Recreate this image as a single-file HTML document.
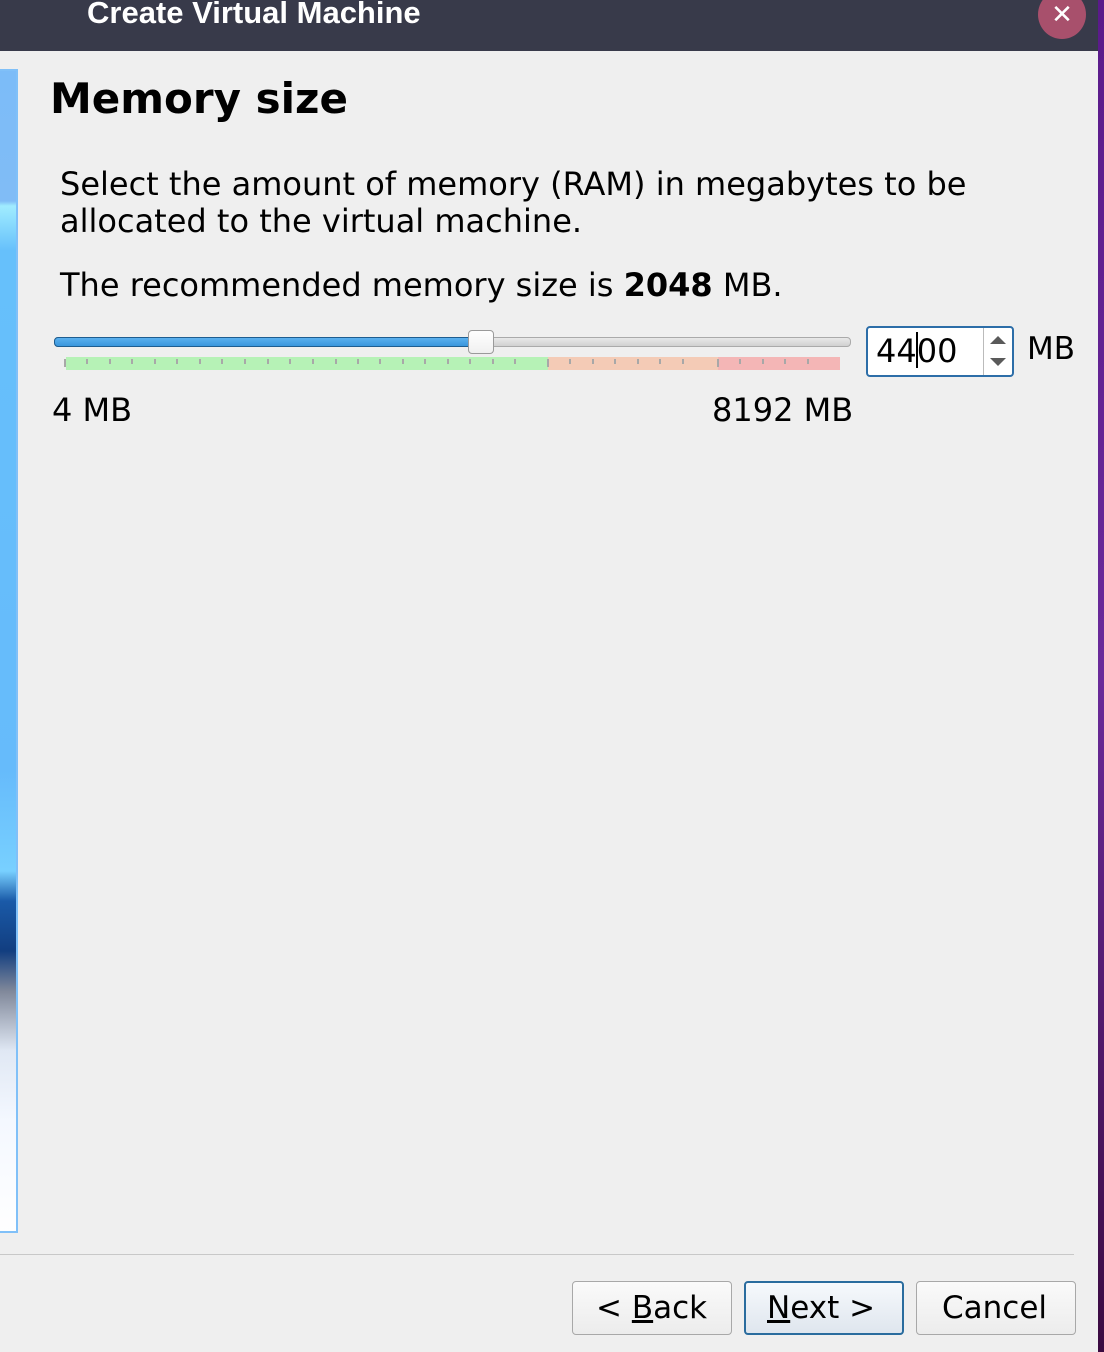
<!DOCTYPE html>
<html><head><meta charset="utf-8"><style>
*{margin:0;padding:0;box-sizing:border-box}
body{width:1104px;height:1352px;background:#efefef;position:relative;overflow:hidden;font-family:"DejaVu Sans","Liberation Sans",sans-serif;color:#000}
.abs{position:absolute}
#bar{left:0;top:0;width:1098px;height:51px;background:#383a4a}
#bar .t{left:87px;top:-5px;font:bold 31px "Liberation Sans",sans-serif;color:#fff;white-space:nowrap}
#close{left:1038px;top:-10px;width:48px;height:49px;border-radius:50%;background:#a8506c;color:#fff;font:bold 26px "DejaVu Sans",sans-serif;text-align:center;line-height:50px}
#edge{left:1098px;top:0;width:6px;height:1352px;background:linear-gradient(#5a1a8a,#6a2a9a 50%,#3a0a40)}
#strip{left:0;top:69px;width:18px;height:1164px;border:2px solid #80c0f8;border-left:none;background:linear-gradient(#7cbcf8 0,#80bcf6 130px,#a0ecff 135px,#66c0fb 180px,#66bbfb 700px,#78d0ff 800px,#1a5aa8 830px,#123e80 880px,#80889a 920px,#e0e8f4 980px,#f4f8ff 1050px,#fff 1164px)}
.txt{font-size:32px;white-space:nowrap}
</style></head><body>
<div id="bar" class="abs"><div class="t abs">Create Virtual Machine</div></div>
<div id="close" class="abs">✕</div>
<div id="edge" class="abs"></div>
<div id="strip" class="abs"></div>
<div class="abs" style="left:50px;top:74px;font-weight:bold;font-size:42px;white-space:nowrap">Memory size</div>
<div class="abs txt" style="left:60px;top:166px;line-height:37px">Select the amount of memory (RAM) in megabytes to be<br>allocated to the virtual machine.</div>
<div class="abs txt" style="left:60px;top:266px">The recommended memory size is <b>2048</b> MB.</div>
<div class="abs" style="left:54px;top:337px;width:797px;height:10px;border-radius:4px;background:linear-gradient(#e8e8e8,#d0d0d0);border:1px solid #aaa"></div>
<div class="abs" style="left:54px;top:337px;width:430px;height:10px;border-radius:4px;background:linear-gradient(#5ab0ee,#3a96dc);border:1px solid #1e5d90"></div>
<div class="abs" style="left:468px;top:330px;width:26px;height:24px;border-radius:4px;background:linear-gradient(#fff,#f0f0f0);border:1px solid #9a9a9a"></div>
<div class="abs" style="left:66px;top:357px;width:482px;height:13px;background:#b6f2b6"></div>
<div class="abs" style="left:548px;top:357px;width:170px;height:13px;background:#f4cbb6"></div>
<div class="abs" style="left:718px;top:357px;width:122px;height:13px;background:#f4b6b6"></div>
<svg class="abs" style="left:0;top:0" width="1104" height="400">
<g stroke="#a8a8a8" stroke-width="2">
<path d="M65 359v8 M87 359v5 M110 359v5 M132 359v5 M155 359v5 M177 359v5 M200 359v5 M222 359v5 M245 359v5 M268 359v5 M290 359v5 M313 359v5 M336 359v5 M358 359v5 M380 359v5 M403 359v5 M425 359v5 M448 359v5 M470 359v5 M493 359v5 M515 359v5 M548 359v8 M570 359v5 M593 359v5 M615 359v5 M638 359v5 M660 359v5 M683 359v5 M718 359v8 M740 359v5 M763 359v5 M785 359v5 M808 359v5"/>
</g></svg>
<div class="abs txt" style="left:52px;top:391px">4 MB</div>
<div class="abs txt" style="left:712px;top:391px">8192 MB</div>
<div class="abs" style="left:866px;top:326px;width:148px;height:51px;border:2px solid #2d6ea8;border-radius:4px;background:#fff"></div>
<div class="abs" style="left:983px;top:328px;width:1px;height:47px;background:#bbb"></div>
<div class="abs txt" style="left:876px;top:332px;font-size:32px">44<span style="display:inline-block;width:2px;height:36px;background:#000;vertical-align:-6px;margin:0 -1px"></span>00</div>
<svg class="abs" style="left:986px;top:330px" width="24" height="44"><path d="M4 14l8-8 8 8z M4 28l8 8 8-8z" fill="#5a5a5a"/></svg>
<div class="abs txt" style="left:1027px;top:331px;font-size:31px">MB</div>
<div class="abs" style="left:0;top:1254px;width:1074px;height:1px;background:#c8c8c8"></div>
<div class="abs" style="left:572px;top:1281px;width:160px;height:54px;border:1px solid #a8a8a8;border-radius:4px;background:linear-gradient(#fafafa,#ececec)"></div>
<div class="abs txt" style="left:596px;top:1290px;font-size:31px">&lt; <u>B</u>ack</div>
<div class="abs" style="left:744px;top:1281px;width:160px;height:54px;border:2px solid #2a6c9e;border-radius:4px;background:linear-gradient(#f6f9fc,#dfe6ee)"></div>
<div class="abs txt" style="left:767px;top:1290px;font-size:31px"><u>N</u>ext &gt;</div>
<div class="abs" style="left:916px;top:1281px;width:160px;height:54px;border:1px solid #a8a8a8;border-radius:4px;background:linear-gradient(#fafafa,#ececec)"></div>
<div class="abs txt" style="left:942px;top:1290px;font-size:31px">Cancel</div>
</body></html>
